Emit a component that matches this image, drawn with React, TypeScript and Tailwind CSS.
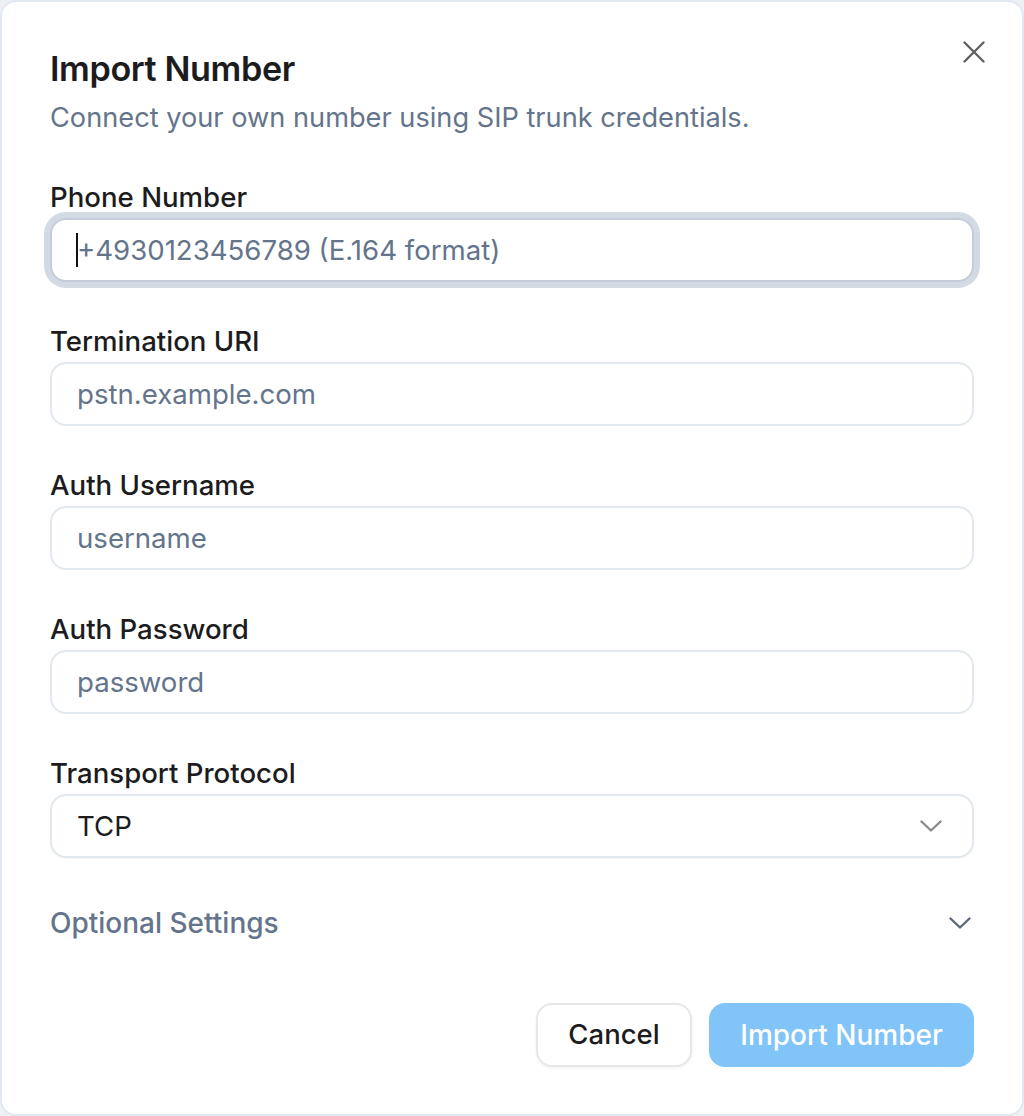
import React from "react";

function Chevron({ className }: { className?: string }) {
  return (
    <svg width="22" height="12" viewBox="0 0 22 12" fill="none" className={className}>
      <path d="M1.5 1.5 11 10.5 20.5 1.5" stroke="currentColor" strokeWidth="2.4" strokeLinecap="round" strokeLinejoin="round" />
    </svg>
  );
}

function Field({ label, placeholder, focused }: { label: string; placeholder: string; focused?: boolean }) {
  return (
    <div className="flex flex-col">
      <label className="text-[27.6px] leading-[28px] font-medium text-[#1c1c1e]">{label}</label>
      <div
        className={
          focused
            ? "mt-[7px] h-[64px] rounded-[16px] border-2 border-[#c3ccd8] ring-[6px] ring-[#d3dae4] bg-white flex items-center px-[25px] relative"
            : "mt-[7px] h-[64px] rounded-[16px] border-2 border-[#e2e8f0] bg-white flex items-center px-[25px] relative"
        }
      >
        {focused && <span className="absolute left-[24px] top-[13px] w-[2px] h-[34px] bg-[#111]" />}
        <span className="text-[27.6px] leading-[28px] text-[#64748b]">{placeholder}</span>
      </div>
    </div>
  );
}

export default function App() {
  return (
    <div className="w-[1024px] h-[1116px] bg-[#eef1f4]" style={{ fontFamily: "Inter, 'Noto Sans', sans-serif" }}>
      <div className="w-full h-full bg-white border-2 border-[#e2e8f0] rounded-[16px] relative px-[48px] pt-[49px] flex flex-col">
        <button className="absolute right-[35px] top-[37px] w-[26px] h-[26px] flex items-center justify-center text-[#5f5f5f]">
          <svg width="22" height="22" viewBox="0 0 22 22" fill="none">
            <path d="M1.5 1.5 20.5 20.5 M20.5 1.5 1.5 20.5" stroke="currentColor" strokeWidth="2.3" strokeLinecap="round" />
          </svg>
        </button>
        <h2 className="text-[34.2px] leading-[36px] font-semibold text-[#1c1c1e] tracking-[-0.4px]">Import Number</h2>
        <p className="mt-[11px] text-[27.2px] leading-[40px] text-[#64748b]">Connect your own number using SIP trunk credentials.</p>

        <div className="mt-[45px] flex flex-col gap-[45px]">
          <Field label="Phone Number" placeholder="+4930123456789 (E.164 format)" focused />
          <Field label="Termination URI" placeholder="pstn.example.com" />
          <Field label="Auth Username" placeholder="username" />
          <Field label="Auth Password" placeholder="password" />
          <div className="flex flex-col">
            <label className="text-[27.6px] leading-[28px] font-medium text-[#1c1c1e]">Transport Protocol</label>
            <div className="mt-[7px] h-[64px] rounded-[16px] border-2 border-[#e2e8f0] bg-white flex items-center justify-between pl-[25px] pr-[30px] shadow-[0_1px_2px_rgba(0,0,0,0.04)]">
              <span className="text-[27.6px] leading-[28px] text-[#1c1c1e]">TCP</span>
              <Chevron className="text-[#8a8a8e]" />
            </div>
          </div>
        </div>

        <div className="mt-[51px] h-[28px] flex items-center justify-between pr-[3px]">
          <span className="text-[28px] leading-[28px] font-medium text-[#64748b]">Optional Settings</span>
          <Chevron className="text-[#5b6678]" />
        </div>

        <div className="mt-[66px] flex justify-end gap-[17px]">
          <button className="h-[64px] w-[156px] rounded-[16px] border-2 border-[#e5e7eb] bg-white text-[27.5px] font-medium text-[#1c1c1e] shadow-[0_1px_3px_rgba(0,0,0,0.06)]">
            Cancel
          </button>
          <button className="h-[64px] w-[265px] rounded-[16px] bg-[#80c4f8] text-[28px] font-medium text-white">
            Import Number
          </button>
        </div>
      </div>
    </div>
  );
}
